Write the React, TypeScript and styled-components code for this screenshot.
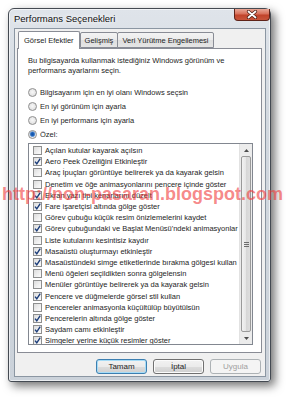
import React from "react";
import styled, { createGlobalStyle } from "styled-components";

const GlobalStyle = createGlobalStyle`
    html, body {
        margin: 0;
        padding: 0;
        background: #ffffff;
    }
    body {
        font-family: "Liberation Sans", Arial, sans-serif;
        font-size: 7.5px;
        color: #1e1e1e;
    }
`;

const options = [
    {label: "Açılan kutular kayarak açılsın", on: false},
    {label: "Aero Peek Özelliğini Etkinleştir", on: true},
    {label: "Araç İpuçları görüntüye belirerek ya da kayarak gelsin", on: false},
    {label: "Denetim ve öğe animasyonlarını pencere içinde göster", on: false},
    {label: "Ekran yazı tipi kenarlarını düzelt", on: true},
    {label: "Fare işaretçisi altında gölge göster", on: true},
    {label: "Görev çubuğu küçük resim önizlemelerini kaydet", on: false},
    {label: "Görev çubuğundaki ve Başlat Menüsü'ndeki animasyonlar", on: true},
    {label: "Liste kutularını kesintisiz kaydır", on: false},
    {label: "Masaüstü oluşturmayı etkinleştir", on: true},
    {label: "Masaüstündeki simge etiketlerinde bırakma gölgesi kullan", on: true},
    {label: "Menü öğeleri seçildikten sonra gölgelensin", on: false},
    {label: "Menüler görüntüye belirerek ya da kayarak gelsin", on: false},
    {label: "Pencere ve düğmelerde görsel stil kullan", on: true},
    {label: "Pencereler animasyonla küçültülüp büyütülsün", on: false},
    {label: "Pencerelerin altında gölge göster", on: true},
    {label: "Saydam camı etkinleştir", on: true},
    {label: "Simgeler yerine küçük resimler göster", on: true},
];

const radios = [
    {label: "Bilgisayarım için en iyi olanı Windows seçsin", on: false},
    {label: "En iyi görünüm için ayarla", on: false},
    {label: "En iyi performans için ayarla", on: false},
    {label: "Özel:", on: true},
];

const App: React.FC = () => {
    return <Page>
        <GlobalStyle/>
        <Window>
            <TitleBar>
                <TitleText>Performans Seçenekleri</TitleText>
                <CloseButton>
                    <svg width="12" height="9" viewBox="0 0 12 9">
                        <path d="M2.5 1.5 L9.5 7.5 M9.5 1.5 L2.5 7.5" stroke="#4a1a10" strokeWidth="3.2"
                              strokeLinecap="round"/>
                        <path d="M2.5 1.5 L9.5 7.5 M9.5 1.5 L2.5 7.5" stroke="#ffffff" strokeWidth="1.8"
                              strokeLinecap="round"/>
                    </svg>
                </CloseButton>
            </TitleBar>
            <Client>
                <TabRow>
                    <Tab $active>Görsel Efektler</Tab>
                    <Tab>Gelişmiş</Tab>
                    <Tab>Veri Yürütme Engellemesi</Tab>
                </TabRow>
                <Panel>
                    <Intro>
                        Bu bilgisayarda kullanmak istediğiniz Windows görünüm ve<br/>
                        performans ayarlarını seçin.
                    </Intro>
                    <RadioList>
                        {radios.map(r => <RadioRow key={r.label}>
                            <RadioCircle $on={r.on}/>
                            <span>{r.label}</span>
                        </RadioRow>)}
                    </RadioList>
                    <ListBox>
                        <ListItems>
                            {options.map(o => <CheckRow key={o.label}>
                                <CheckBox>
                                    {o.on && <svg width="9" height="9" viewBox="0 0 9 9">
                                        <path d="M2 4.6 L3.8 6.8 L7.2 1.6" stroke="#1b3d7a" strokeWidth="1.4"
                                              fill="none"/>
                                    </svg>}
                                </CheckBox>
                                <span>{o.label}</span>
                            </CheckRow>)}
                        </ListItems>
                        <ScrollBar>
                            <ScrollArrow>
                                <svg width="5" height="3" viewBox="0 0 5 3"><path d="M0 3 L2.5 0 L5 3 Z" fill="#4d4d4d"/></svg>
                            </ScrollArrow>
                            <ScrollThumb>
                                <Grip/>
                            </ScrollThumb>
                            <ScrollArrow>
                                <svg width="5" height="3" viewBox="0 0 5 3"><path d="M0 0 L2.5 3 L5 0 Z" fill="#4d4d4d"/></svg>
                            </ScrollArrow>
                        </ScrollBar>
                    </ListBox>
                </Panel>
                <ButtonRow>
                    <DialogButton $default>Tamam</DialogButton>
                    <DialogButton>İptal</DialogButton>
                    <DialogButton disabled>Uygula</DialogButton>
                </ButtonRow>
            </Client>
        </Window>
        <Watermark>http://non-pasaran.blogspot.com</Watermark>
    </Page>
}

const Page = styled.div`
    position: relative;
    width: 286px;
    height: 400px;
    overflow: hidden;
    padding: 8px 0 0 8px;
    box-sizing: border-box;
`;

const Window = styled.div`
    width: 263px;
    height: 374px;
    box-sizing: border-box;
    display: flex;
    flex-direction: column;
    border: 1px solid #444a52;
    border-radius: 6px 6px 3px 3px;
    background: linear-gradient(180deg, #dfe4ea 0%, #d2d8df 30%, #cbd2da 100%);
    box-shadow: 4px 4px 10px rgba(0, 0, 0, 0.55), inset 0 0 0 1px rgba(255, 255, 255, 0.6);
`;

const TitleBar = styled.div`
    height: 19px;
    display: flex;
    align-items: flex-start;
    padding-left: 5px;
`;

const TitleText = styled.div`
    line-height: 20px;
    font-size: 9.5px;
    color: #101010;
    text-shadow: 0 0 4px #ffffff, 0 0 6px #ffffff;
`;

const CloseButton = styled.div`
    margin-left: auto;
    width: 36px;
    height: 12px;
    box-sizing: border-box;
    display: flex;
    align-items: center;
    justify-content: center;
    border: 1px solid #5e2319;
    border-top: none;
    border-radius: 0 0 4px 4px;
    background: linear-gradient(180deg, #e9a897 0%, #d8705a 45%, #c1432a 55%, #c8553b 100%);
`;

const Client = styled.div`
    flex: 1;
    margin: 0 4px 4px 5px;
    background: #f0f0f0;
    border: 1px solid #8b96a2;
    display: flex;
    flex-direction: column;
    padding: 2px 3px 0 2px;
`;

const TabRow = styled.div`
    display: flex;
    align-items: flex-end;
    height: 17px;
    padding-left: 1px;
    position: relative;
    z-index: 1;
`;

const Tab = styled.div<{ $active?: boolean }>`
    box-sizing: border-box;
    height: ${p => p.$active ? "18px" : "16px"};
    margin-bottom: ${p => p.$active ? "-1px" : "0"};
    margin-left: ${p => p.$active ? "0" : "-1px"};
    padding: ${p => p.$active ? "4px 5px 0 5px" : "3px 4px 0 4px"};
    border: 1px solid #898c95;
    border-bottom: ${p => p.$active ? "none" : "1px solid #898c95"};
    border-radius: 2px 2px 0 0;
    background: ${p => p.$active ? "#ffffff" : "linear-gradient(180deg, #f3f3f3 0%, #ebebeb 50%, #dedede 51%, #e5e5e5 100%)"};
    line-height: 10px;
    font-size: 7.5px;
    white-space: nowrap;
    &:first-child + & {
        margin-left: 0;
    }
`;

const Panel = styled.div`
    height: 305px;
    box-sizing: border-box;
    background: #ffffff;
    border: 1px solid #898c95;
    padding: 7px 8px 0 10px;
    display: flex;
    flex-direction: column;
`;

const Intro = styled.div`
    line-height: 10px;
    white-space: nowrap;
`;

const RadioList = styled.div`
    display: flex;
    flex-direction: column;
    margin-top: 9px;
`;

const RadioRow = styled.div`
    display: flex;
    align-items: center;
    height: 14px;
    gap: 3px;
    white-space: nowrap;
`;

const RadioCircle = styled.div<{ $on?: boolean }>`
    width: 9px;
    height: 9px;
    box-sizing: border-box;
    border-radius: 50%;
    border: 1px solid #8f8f8f;
    background: ${p => p.$on
        ? "radial-gradient(circle at 50% 45%, #0b4fa8 0, #1f62b8 1.6px, #7fa9dc 2.6px, #eaeaea 3.2px, #f6f6f6 100%)"
        : "radial-gradient(circle at 50% 45%, #f8f8f8 0, #e2e2e2 70%, #d6d6d6 100%)"};
`;

const ListBox = styled.div`
    margin-top: 2px;
    height: 202px;
    box-sizing: border-box;
    border: 1px solid #828790;
    background: #ffffff;
    display: flex;
    overflow: hidden;
`;

const ListItems = styled.div`
    flex: 1;
    padding: 1px 0 0 4px;
    overflow: hidden;
`;

const CheckRow = styled.div`
    display: flex;
    align-items: center;
    height: 11.2px;
    gap: 3px;
    white-space: nowrap;
`;

const CheckBox = styled.div`
    width: 9px;
    height: 9px;
    flex-shrink: 0;
    box-sizing: border-box;
    border: 1px solid #8e8f8f;
    background: linear-gradient(135deg, #dcdcdc 0%, #f0f0f0 60%, #fbfbfb 100%);
    display: flex;
    align-items: center;
    justify-content: center;
    svg {
        margin: -1px;
    }
`;

const ScrollBar = styled.div`
    width: 12px;
    display: flex;
    flex-direction: column;
    background: #ececec;
    border-left: 1px solid #e2e2e2;
`;

const ScrollArrow = styled.div`
    height: 12px;
    display: flex;
    align-items: center;
    justify-content: center;
`;

const ScrollThumb = styled.div`
    flex: 1;
    margin: 0 1px;
    border: 1px solid #9a9a9a;
    border-radius: 2px;
    background: linear-gradient(90deg, #f2f2f2 0%, #e6e6e6 50%, #d6d6d6 51%, #dedede 100%);
    display: flex;
    align-items: center;
    justify-content: center;
`;

const Grip = styled.div`
    width: 5px;
    height: 5px;
    background: repeating-linear-gradient(180deg, #6d6d6d 0, #6d6d6d 1px, transparent 1px, transparent 2px);
`;

const ButtonRow = styled.div`
    display: flex;
    justify-content: flex-end;
    gap: 6px;
    padding: 6px 1px 0 0;
`;

const DialogButton = styled.button<{ $default?: boolean }>`
    width: 51px;
    height: 15px;
    padding: 0;
    box-sizing: border-box;
    font-family: "Liberation Sans", Arial, sans-serif;
    font-size: 8px;
    line-height: 12px;
    color: #1e1e1e;
    border: 1px solid ${p => p.$default ? "#3c7fb1" : "#707070"};
    border-radius: 3px;
    background: linear-gradient(180deg, #f2f2f2 0%, #ebebeb 50%, #dddddd 51%, #cfcfcf 100%);
    box-shadow: ${p => p.$default ? "inset 0 0 0 1px #a6dcf7" : "inset 0 0 0 1px #fbfbfb"};
    &:disabled {
        color: #a0a0a0;
        border-color: #adb2b5;
        background: #f4f4f4;
        box-shadow: none;
    }
`;

const Watermark = styled.div`
    position: absolute;
    left: 2px;
    top: 184px;
    font-family: "Liberation Sans", Arial, sans-serif;
    font-weight: bold;
    font-size: 18px;
    white-space: nowrap;
    color: rgba(240, 60, 60, 0.62);
    pointer-events: none;
`;

export default App;
